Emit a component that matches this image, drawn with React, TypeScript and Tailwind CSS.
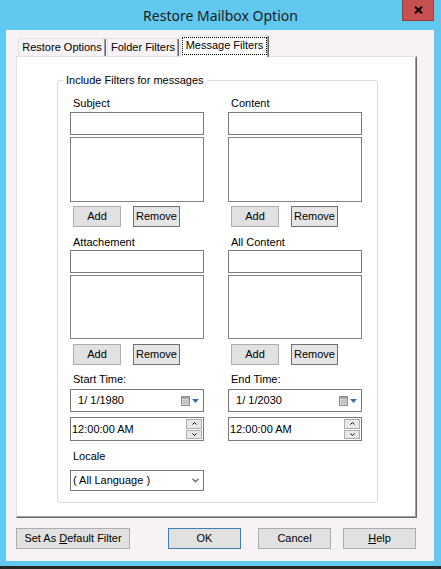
import type { ReactNode } from 'react'

function Btn({ children, className = '' }: { children: ReactNode; className?: string }) {
  return (
    <button type='button' className={`h-[21px] border bg-[#e1e1e1] text-[11px] leading-none text-black ${className}`}>
      {children}
    </button>
  )
}

function Label({ children, className = '' }: { children: ReactNode; className?: string }) {
  return <span className={`block pl-[3px] text-[11px] leading-[13px] text-black ${className}`}>{children}</span>
}

function FilterBlock({ label, first }: { label: string; first?: boolean }) {
  return (
    <div className={`flex flex-col ${first ? '' : 'mt-[9px]'}`}>
      <Label>{label}</Label>
      <div className={`${first ? 'mt-[2px]' : 'mt-[1px]'} h-[23px] border border-[#7a7a7a] bg-white`} />
      <div className={`mt-[2px] ${first ? 'h-[65px]' : 'h-[64px]'} border border-[#828282] bg-white`} />
      <div className={`${first ? 'mt-[4px]' : 'mt-[5px]'} flex gap-[12px] pl-[3px]`}>
        <Btn className='w-[48px] border-[#adadad]'>Add</Btn>
        <Btn className='w-[47px] border-[#707070] bg-[#e5e5e5]'>Remove</Btn>
      </div>
    </div>
  )
}

function CalendarIcon() {
  return (
    <svg width='9' height='10' viewBox='0 0 9 10' className='shrink-0'>
      <rect x='0.5' y='0.5' width='8' height='9' fill='#f4f4f4' stroke='#8c8c8c' />
      <rect x='1' y='1' width='7' height='2' fill='#a8a8a8' />
      <path d='M1 5H8M1 7H8M3 3V9M5 3V9M7 3V9' stroke='#b4b4b4' strokeWidth='1' />
    </svg>
  )
}

function DateBox({ value }: { value: string }) {
  return (
    <div className='mt-[3px] flex h-[23px] items-center border border-[#7a7a7a] bg-white pl-[4px] pr-[4px]'>
      <span className='flex-1 whitespace-pre text-[11px] leading-none text-black'>{value}</span>
      <CalendarIcon />
      <svg width='7' height='4' viewBox='0 0 7 4' className='ml-[2px] shrink-0'>
        <path d='M0 0H7L3.5 4Z' fill='#3b6ea5' />
      </svg>
    </div>
  )
}

function TimeBox() {
  return (
    <div className='mt-[5px] flex h-[24px] items-center border border-[#7a7a7a] bg-white pl-[1px] pr-[1px]'>
      <span className='flex-1 text-[11px] leading-none text-black'>12:00:00 AM</span>
      <div className='flex h-[20px] w-[16px] flex-col gap-[1px]'>
        <div className='flex flex-1 items-center justify-center border border-[#acacac] bg-[#e8e8e8]'>
          <svg width='5' height='3' viewBox='0 0 5 3'>
            <path d='M0.5 2.5L2.5 0.5L4.5 2.5' fill='none' stroke='#000' strokeWidth='1' />
          </svg>
        </div>
        <div className='flex flex-1 items-center justify-center border border-[#acacac] bg-[#e8e8e8]'>
          <svg width='5' height='3' viewBox='0 0 5 3'>
            <path d='M0.5 0.5L2.5 2.5L4.5 0.5' fill='none' stroke='#000' strokeWidth='1' />
          </svg>
        </div>
      </div>
    </div>
  )
}

function TimeBlock({ label, date }: { label: string; date: string }) {
  return (
    <div className='mt-[8px] flex flex-col'>
      <Label>{label}</Label>
      <DateBox value={date} />
      <TimeBox />
    </div>
  )
}

export default function App() {
  return (
    <div className="flex h-[569px] w-[441px] flex-col border-b-[3px] border-[#262626] bg-[#61c9ef] font-['Liberation_Sans',Arial,sans-serif]">
      <div className='relative flex h-[30px] shrink-0 items-center justify-center'>
        <span className="pt-[1px] font-['Noto_Sans','Open_Sans',sans-serif] text-[14px] text-[#1b1b1b]">Restore Mailbox Option</span>
        <button type='button' className='absolute right-[7px] top-0 flex h-[21px] w-[32px] items-center justify-center border border-t-0 border-[#a23b3b] bg-[#c75050]'>
          <svg width='9' height='8' viewBox='0 0 9 8'>
            <path d='M1 0.8L8 7.2M8 0.8L1 7.2' stroke='#000' strokeWidth='2' />
          </svg>
        </button>
      </div>

      <div className='ml-[6px] flex h-[531px] w-[428px] flex-col bg-[#f6f2f6]'>
        {/* tabs */}
        <div className='flex h-[26px] items-end'>
          <div className='ml-[12px] flex h-[18px] w-[88px] items-center justify-center rounded-t-[2px] border-l border-t border-r border-[#e3e3e3] border-r-[#696969] text-[11px] text-black shadow-[inset_-1px_0_0_#a0a0a0]'>
            Restore Options
          </div>
          <div className='ml-[1px] flex h-[18px] w-[72px] items-center justify-center rounded-t-[2px] border-l border-t border-r border-[#e3e3e3] border-r-[#696969] text-[11px] text-black shadow-[inset_-1px_0_0_#a0a0a0]'>
            Folder Filters
          </div>
          <div className='relative z-10 -mb-[1px] ml-[1px] flex h-[22px] w-[89px] items-start justify-center rounded-t-[2px] border-l border-t border-r border-[#e3e3e3] border-r-[#696969] bg-white pt-[1px] text-[11px] text-black shadow-[inset_-1px_0_0_#a0a0a0]'>
            <span className='border border-dotted border-black px-[3px] pb-[2px] pt-[1px] leading-[13px]'>Message Filters</span>
          </div>
        </div>

        {/* tab panel */}
        <div className='ml-[10px] h-[462px] w-[401px] border border-[#e3e3e3] border-b-[#696969] border-r-[#696969] bg-white pl-[40px] pt-[17px] shadow-[inset_-1px_-1px_0_#a0a0a0]'>
          <fieldset className='w-[321px] rounded-[3px] border border-[#dcdcdc] pb-[11px] pl-[12px]'>
            <legend className='ml-[-7px] px-[3px] text-[11px] leading-[13px] text-black'>Include Filters for messages</legend>
            <div className='flex gap-[24px] pt-[10px]'>
              <div className='flex w-[134px] flex-col'>
                <FilterBlock label='Subject' first />
                <FilterBlock label='Attachement' />
                <TimeBlock label='Start Time:' date=' 1/ 1/1980' />
                <Label className='mt-[9px]'>Locale</Label>
                <div className='mt-[7px] flex h-[21px] items-center border border-[#7a7a7a] bg-white pl-[2px] pr-[4px]'>
                  <span className='flex-1 text-[11px] leading-none text-black'>( All Language )</span>
                  <svg width='7' height='5' viewBox='0 0 7 5'>
                    <path d='M0.5 0.8L3.5 3.8L6.5 0.8' fill='none' stroke='#6d6d6d' strokeWidth='1.3' />
                  </svg>
                </div>
              </div>
              <div className='flex w-[134px] flex-col'>
                <FilterBlock label='Content' first />
                <FilterBlock label='All Content' />
                <TimeBlock label='End Time:' date=' 1/ 1/2030' />
              </div>
            </div>
          </fieldset>
        </div>

        {/* bottom buttons */}
        <div className='mt-[10px] flex'>
          <Btn className='ml-[10px] w-[114px] border-[#adadad]'>
            Set As <span className='underline'>D</span>efault Filter
          </Btn>
          <Btn className='ml-[38px] w-[73px] border-[#3c7fb1]'>OK</Btn>
          <Btn className='ml-[17px] w-[73px] border-[#adadad]'>Cancel</Btn>
          <Btn className='ml-[12px] w-[73px] border-[#adadad]'>
            <span className='underline'>H</span>elp
          </Btn>
        </div>
      </div>
    </div>
  )
}
